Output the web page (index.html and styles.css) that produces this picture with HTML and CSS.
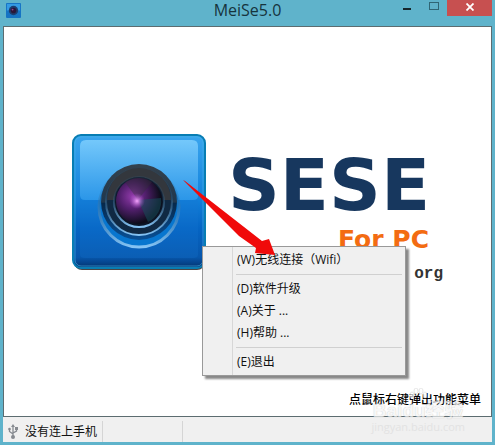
FILE: index.html
```
<!DOCTYPE html>
<html lang="zh-CN">
<head>
<meta charset="UTF-8">
<title>MeiSe5.0</title>
<link rel="stylesheet" href="styles.css">
</head>
<body>
<div class="window">
  <header class="titlebar">
    <svg class="app-icon" viewBox="0 0 16 16">
      <rect width="16" height="16" rx="1" fill="#1673c4"/>
      <rect x="1" y="1" width="14" height="7" fill="#349be4"/>
      <circle cx="8" cy="8" r="5" fill="#1c3d6e"/>
      <circle cx="8" cy="8" r="3" fill="#2b1638"/>
      <circle cx="7" cy="7" r="1" fill="#8a4a94"/>
    </svg>
    <h1>MeiSe5.0</h1>
    <div class="controls">
      <button class="min" aria-label="最小化"><svg width="8" height="2"><rect width="8" height="2" fill="#16262b"/></svg></button>
      <button class="max" aria-label="最大化"><svg width="10" height="8"><rect x="0.5" y="0.5" width="9" height="7" fill="none" stroke="#2f6675"/></svg></button>
      <button class="close" aria-label="关闭"><svg width="8" height="8"><path d="M0.5 0.5L7.5 7.5M7.5 0.5L0.5 7.5" stroke="#fff" stroke-width="1.8"/></svg></button>
    </div>
  </header>

  <main class="client">
    <div class="brand">
      <svg class="logo" viewBox="0 0 136 140">
        <defs>
          <linearGradient id="body" x1="0" y1="0" x2="0" y2="1">
            <stop offset="0" stop-color="#3aa5ee"/>
            <stop offset="0.45" stop-color="#1483dc"/>
            <stop offset="0.7" stop-color="#0565c4"/>
            <stop offset="0.92" stop-color="#0756ab"/>
            <stop offset="1" stop-color="#04336f"/>
          </linearGradient>
          <linearGradient id="gloss" x1="0" y1="0" x2="0" y2="1">
            <stop offset="0" stop-color="#74c8fb"/>
            <stop offset="1" stop-color="#2b96e8"/>
          </linearGradient>
          <linearGradient id="ring" x1="0" y1="0" x2="0" y2="1">
            <stop offset="0.3" stop-color="#2d5f86" stop-opacity="0.2"/>
            <stop offset="1" stop-color="#86c4f4"/>
          </linearGradient>
          <linearGradient id="rim" x1="0" y1="0" x2="0" y2="1">
            <stop offset="0" stop-color="#34414d"/>
            <stop offset="0.5" stop-color="#20384e"/>
            <stop offset="0.52" stop-color="#07294b"/>
            <stop offset="1" stop-color="#095096"/>
          </linearGradient>
          <radialGradient id="lens" cx="0.36" cy="0.4" r="0.6">
            <stop offset="0" stop-color="#923bab"/>
            <stop offset="0.45" stop-color="#54206f"/>
            <stop offset="1" stop-color="#0d0d1b"/>
          </radialGradient>
          <radialGradient id="glow">
            <stop offset="0" stop-color="#f6a6ff"/>
            <stop offset="1" stop-color="#a54cc8" stop-opacity="0"/>
          </radialGradient>
        </defs>
        <rect x="2" y="6" width="131" height="131" rx="8" fill="#4c4542"/>
        <rect x="1" y="2" width="132" height="133" rx="8" fill="url(#body)" stroke="#087db3" stroke-width="2"/>
        <rect x="3" y="4" width="128" height="129" rx="6" fill="none" stroke="#47b5e8" opacity="0.6"/>
        <path d="M8 13Q8 7 14 7H120Q126 7 126 13V63Q126 67 121 67H13Q8 67 8 62Z" fill="url(#gloss)"/>
        <path d="M8 67H126V122Q126 125 121 125H13Q8 125 8 122Z" fill="#1679d5" opacity="0.25"/>
        <circle cx="67" cy="74" r="40" fill="#0876cf" stroke="url(#ring)" stroke-width="3"/>
        <circle cx="67" cy="69" r="38" fill="url(#rim)"/>
        <circle cx="67" cy="69" r="33" fill="#102943" stroke="url(#ring)" stroke-width="2"/>
        <path d="M35 67A32 32 0 0 1 99 67Z" fill="#33373d"/>
        <circle cx="67" cy="69" r="25" fill="#0b1526" stroke="url(#ring)" stroke-width="2"/>
        <circle cx="67" cy="68" r="23" fill="url(#lens)"/>
        <path d="M66 67L89 65A23 23 0 0 1 76 89Z" fill="#174e5b" opacity="0.55"/>
        <path d="M66 67L53 49A23 23 0 0 1 80 49Z" fill="#333039" opacity="0.4"/>
        <circle cx="65" cy="68" r="8" fill="url(#glow)"/>
      </svg>
      <div class="wordmark">
        <div class="name">SESE</div>
        <div class="edition">For PC</div>
        <div class="domain">org</div>
      </div>
    </div>
    <p class="hint">点鼠标右键弹出功能菜单</p>

    <ul class="menu">
      <li><button>(W)无线连接（Wifi）</button></li>
      <li class="sep"></li>
      <li><button>(D)软件升级</button></li>
      <li><button>(A)关于 ...</button></li>
      <li><button>(H)帮助 ...</button></li>
      <li class="sep"></li>
      <li><button>(E)退出</button></li>
    </ul>

    <svg class="arrow" viewBox="0 0 94 77">
      <path d="M0 0L2 1L79 61L86 59L92 75L72 73L73 68L56 56Z" fill="#f00a0a"/>
    </svg>

    <div class="watermark">
      <svg width="18" height="14" viewBox="0 0 18 14" fill="#fff" stroke="#ddd">
        <ellipse cx="3" cy="7" rx="2" ry="3"/>
        <ellipse cx="7" cy="3" rx="2" ry="3"/>
        <ellipse cx="12" cy="3" rx="2" ry="3"/>
        <ellipse cx="16" cy="7" rx="2" ry="3"/>
      </svg>
      <b>Baidu经验</b>
      <span>jingyan.baidu.com</span>
    </div>
  </main>

  <footer class="statusbar">
    <div class="cell phone">
      <svg width="10" height="15" viewBox="0 0 10 15" fill="none" stroke="#868a90">
        <path d="M5 2V12M5 10L1.500 7.500V5M5 9L8.500 7V4" stroke-width="1.300"/>
        <path d="M5 0L7 3H3Z" fill="#868a90" stroke="none"/>
        <circle cx="1.500" cy="5" r="1.300" fill="#868a90" stroke="none"/>
        <rect x="7" y="3" width="3" height="3" fill="#868a90" stroke="none"/>
        <circle cx="5" cy="13" r="2" fill="#868a90" stroke="none"/>
      </svg>
      没有连上手机
    </div>
    <div class="cell"></div>
  </footer>
</div>
</body>
</html>
```
FILE: styles.css
```
* { box-sizing: border-box; }
body { margin: 0; font-family: "Open Sans", "Noto Sans CJK SC", sans-serif; font-size: 12px; color: #111; }
button { font: inherit; color: inherit; border: 0; padding: 0; background: none; }

.window { display: flex; flex-direction: column; min-height: 100vh; padding: 0 3px 3px; background: #5fb3cb; }

/* title bar */
.titlebar { display: grid; grid-template-columns: 1fr auto 1fr; height: 26px; }
.app-icon { width: 15px; height: 15px; margin: 3px 0 0 3px; }
.titlebar h1 { margin: 0; font-size: 16px; font-weight: 400; line-height: 20px; color: #16343d; }
.controls { display: flex; justify-content: flex-end; align-items: flex-start; }
.controls button { display: flex; justify-content: center; align-items: center; width: 27px; height: 16px; }
.controls .min { align-items: flex-end; padding-bottom: 6px; }
.controls .max { height: 12px; }
.controls .close { width: 45px; background: #c75050; height: 16px; padding-bottom: 2px; }

/* client area */
.client { position: relative; flex: 1; display: flex; flex-direction: column; justify-content: space-between; background: #fff; border: 1px solid #5c6c70; }
.brand { display: flex; gap: 20px; padding: 106px 48px 0 68px; }
.logo { flex: none; width: 136px; height: 140px; }
.wordmark { display: flex; flex-direction: column; width: 216px; padding-top: 22px; }
.name { font-family: "DejaVu Sans", sans-serif; font-size: 72px; font-weight: 700; line-height: 60px; color: #17375e; }
.edition { margin: 8px 14px 0 0; font-family: "DejaVu Sans", sans-serif; font-size: 25px; font-weight: 700; line-height: 34px; text-align: right; color: #f36c12; }
.domain { font-family: "Liberation Mono", monospace; font-size: 16px; font-weight: 700; line-height: 34px; text-align: right; color: #333; }
.hint { margin: 0 10px 7px; font-weight: 500; line-height: 18px; text-align: right; color: #000; }

.menu { position: absolute; left: 198px; top: 219px; width: 204px; margin: 0; padding: 2px 3px; list-style: none; background: linear-gradient(90deg, transparent 29px, #d7d7d7 29px, #d7d7d7 30px, transparent 30px) #f0f0f0; border: 1px solid #999; box-shadow: 3px 3px 2px #888; }
.menu button { display: block; width: 100%; height: 22px; padding-left: 31px; line-height: 22px; text-align: left; }
.menu .sep { height: 1px; margin: 3px 0 3px 30px; background: #d0d0d0; }
.arrow { position: absolute; left: 179px; top: 153px; width: 94px; height: 77px; }

.watermark { position: absolute; right: 26px; bottom: -18px; display: flex; flex-direction: column; align-items: center; color: #ddd; opacity: .7; pointer-events: none; }
.watermark b { font-family: "Liberation Sans", "Noto Sans CJK SC", sans-serif; font-size: 19px; line-height: 18px; color: #f4f4f4; text-shadow: 0 0 1px #aaa; }
.watermark span { font-size: 11px; line-height: 14px; }

/* status bar */
.statusbar { display: flex; height: 25px; padding-top: 4px; background: #f0f0f0; }
.cell { width: 80px; border-right: 1px solid #d5d5d5; }
.phone { display: flex; align-items: center; gap: 7px; width: 100px; padding-left: 5px; line-height: 20px; white-space: nowrap; }
```
